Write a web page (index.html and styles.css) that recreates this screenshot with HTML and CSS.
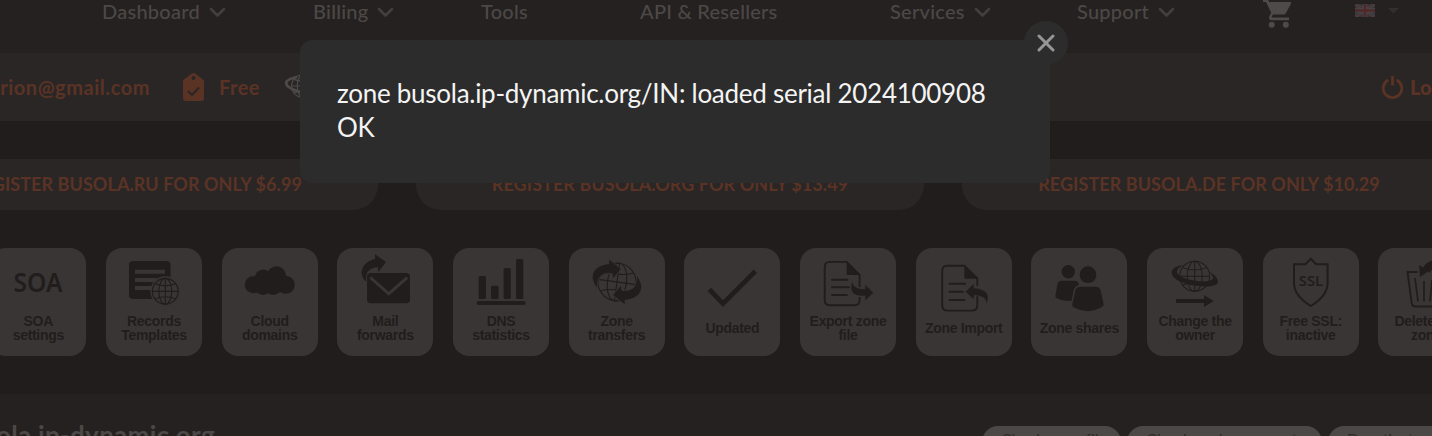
FILE: index.html
```html
<!DOCTYPE html>
<html lang="en">
<head>
<meta charset="utf-8">
<title>Zone management</title>
<link rel="stylesheet" href="styles.css">
</head>
<body>
<svg width="0" height="0" class="defs">
  <defs>
    <g id="globe" fill="none" stroke="currentColor">
      <circle r="19"/><ellipse rx="9.5" ry="19"/>
      <path d="M-19 0H19M0-19V19M-15-11Q0-5 15-11M-15 11Q0 5 15 11"/>
    </g>
    <path id="chev" d="M2 2l6.500 6.500L15 2" fill="none" stroke="#433f3e" stroke-width="2.600" stroke-linecap="round" stroke-linejoin="round"/>
  </defs>
</svg>
<div class="page">
  <nav class="nav">
    <a><span>Dashboard</span><svg width="17" height="11"><use href="#chev"/></svg></a>
    <a><span>Billing</span><svg width="17" height="11"><use href="#chev"/></svg></a>
    <a><span>Tools</span></a>
    <a><span>API &amp; Resellers</span></a>
    <a><span>Services</span><svg width="17" height="11"><use href="#chev"/></svg></a>
    <a><span>Support</span><svg width="17" height="11"><use href="#chev"/></svg></a>
    <a class="cart"><svg width="29" height="29" viewBox="0 0 29 29"><path fill="currentColor" d="M0 0h4.800l1.400 3H27q1.700.2 1 1.700l-5.200 9.500q-.8 1.300-2.300 1.300H9.900l-1.300 2.400q0 .5.500.5H26v2.900H8.600q-3.500-.4-2.300-4l1.900-3.500L3 2.900H0z"/><circle cx="8.700" cy="25.800" r="3" fill="currentColor"/><circle cx="22.800" cy="25.800" r="3" fill="currentColor"/></svg></a>
    <a class="lang"><svg width="20" height="13"><rect width="20" height="13" fill="#33313c"/><path d="M0 0l20 13M20 0L0 13" stroke="#4a4546" stroke-width="3"/><path d="M0 0l20 13M20 0L0 13" stroke="#4a2b2c" stroke-width="1"/><path d="M10 0v13M0 6.500h20" stroke="#4a4546" stroke-width="4.600"/><path d="M10 0v13M0 6.500h20" stroke="#502829" stroke-width="2.600"/></svg><svg width="12" height="6"><path d="M0 0h11L5.500 5.500z" fill="#332f2e"/></svg></a>
  </nav>
  <div class="account">
    <span class="mail">marion@gmail.com</span>
    <svg class="tag" width="21" height="29" viewBox="0 0 21 29"><path fill="currentColor" fill-rule="evenodd" d="M8.500.8Q10.500-.6 12.500.8L20 6.500q1 .8 1 2V25q0 3-3 3H3q-3 0-3-3V8.500q0-1.200 1-2zM10.500 3a2 2 0 100 4 2 2 0 000-4z"/><path d="M5 18l4 4 7-7.500" fill="none" stroke="#2a2625" stroke-width="2"/></svg>
    <span class="plan">Free</span>
    <svg class="planet" width="46" height="30" viewBox="0 0 46 30"><use href="#globe" transform="translate(18 14) scale(.6)" stroke-width="2"/><path fill="none" stroke="currentColor" stroke-width="2.800" d="M12 5C-3 8-2 14 12 19s26 1 22-5"/></svg>
    <span class="logout"><svg width="23" height="25" viewBox="0 0 23 25"><path d="M7.300 5a9.300 9.300 0 108.400 0M11.500 1v9.500" fill="none" stroke="currentColor" stroke-width="2.800"/></svg><b>Logout</b></span>
  </div>
  <div class="offers">
    <a>REGISTER BUSOLA.RU FOR ONLY $6.99</a>
    <a>REGISTER BUSOLA.ORG FOR ONLY $13.49</a>
    <a>REGISTER BUSOLA.DE FOR ONLY $10.29</a>
  </div>
  <div class="tiles">
    <a><svg class="ic" viewBox="0 0 96 66"><text class="soa" x="23.500" y="43.700" textLength="49" lengthAdjust="spacingAndGlyphs">SOA</text></svg><span>SOA<br>settings</span></a>
    <a><svg class="ic" viewBox="0 0 96 66"><rect x="23" y="13" width="41.500" height="38" rx="4"/><path class="cut" d="M31 23.700h26M31 31.900h18M31 40h14" stroke-width="4"/><circle cx="59.300" cy="43.300" r="15" fill="#393534"/><use href="#globe" transform="translate(59.300 43.300) scale(.68)" stroke-width="1.700"/></svg><span>Records<br>Templates</span></a>
    <a><svg class="ic" viewBox="0 0 96 66"><circle cx="31.200" cy="36.800" r="8.500"/><circle cx="41.300" cy="30.300" r="8.700"/><circle cx="54.500" cy="27.700" r="9.500"/><circle cx="63.800" cy="36.800" r="9"/><circle cx="41" cy="38.500" r="8.500"/><circle cx="51.300" cy="38.500" r="8.500"/></svg><span>Cloud<br>domains</span></a>
    <a><svg class="ic" viewBox="0 0 96 66"><rect x="30" y="25" width="43" height="30.300" rx="4"/><path class="cut" d="M34.500 30.500l17.200 15.300L69 30.500" stroke-width="3"/><path d="M29.300 33.700C22 28 22.500 15 38 11V6.300L49 14l-7.700 10-.5-5C33 20 28 23 29.300 33.700z"/></svg><span>Mail<br>forwards</span></a>
    <a><svg class="ic" viewBox="0 0 96 66"><rect x="25.700" y="28" width="7.300" height="23" rx="1.500"/><rect x="38" y="37.700" width="7.600" height="13.300" rx="1.500"/><rect x="50.600" y="20" width="7.200" height="31" rx="1.500"/><rect x="63" y="11" width="7.300" height="40" rx="1.500"/><rect x="23.700" y="53" width="49" height="4" rx="2"/></svg><span>DNS<br>statistics</span></a>
    <a><svg class="ic" viewBox="0 0 96 66"><use href="#globe" transform="translate(48 34) rotate(8)" stroke-width="1.100"/><g class="halo"><path id="sw" d="M28 39.500C20 29 23 18 40.300 16v-4.300L51.700 21l-7.400 9-1-4.700C34 24 27.500 28 28 39.500z"/><use href="#sw" transform="rotate(180 48 34)"/></g></svg><span>Zone<br>transfers</span></a>
    <a><svg class="ic" viewBox="0 0 96 66"><path class="ln" d="M25.300 41.300L39 55.600l32.300-32.300" stroke-width="4.800"/></svg><span>Updated</span></a>
    <a><svg class="ic" viewBox="0 0 96 66"><path class="ln" d="M59.600 39V27L46.700 13.900H30q-5.300 0-5.300 5.300V52q0 5.300 5.300 5.300h24.300q5.300 0 5.300-5.300v-3" stroke-width="1.900"/><path d="M46.700 14v13h13z"/><path class="ln" d="M32 31.700h15.500M32 39.300h17M32 47h15" stroke-width="1.900" stroke-linecap="round"/><path class="halo" d="M52.500 33Q52 41 65.300 41.300V37l8 7.700-8 7.500V47.500Q47 49 52.500 33z"/></svg><span>Export zone<br>file</span></a>
    <a><svg class="ic" viewBox="0 0 96 66"><path class="ln" d="M61.300 38V30.500L48.400 17.700H31.500q-5.300 0-5.300 5.300V57q0 5.600 5.300 5.600h24.500q5.300 0 5.300-5.600v-9" stroke-width="1.900"/><path d="M48.400 17.700v13h13z"/><path class="ln" d="M33.500 35.700h15.500M33.500 43.700h13.500M33.500 52h15" stroke-width="1.900" stroke-linecap="round"/><path class="halo" d="M70 56Q72 48 57.700 47v4.300l-8-7.600 8-7.700v4.300Q77 42 70 56z"/></svg><span>Zone Import</span></a>
    <a><svg class="ic" viewBox="0 0 96 66"><circle cx="37.300" cy="23.700" r="6.700"/><circle cx="57" cy="26.700" r="8.400"/><path d="M31 32.800h13q3 0 4 4-4 1.500-5.500 6L40.500 53Q30 53 25.500 50q-1.500-1-1-3l2-11q1-3.200 4.500-3.200z"/><path d="M49.500 38.700h15q4.300 0 5.200 4l2.800 13q.5 2-1.500 3.300Q57 67 43 59.500q-2.300-1.300-1.700-3.500l3-13.300q1-4 5.200-4z"/></svg><span>Zone shares</span></a>
    <a><svg class="ic" viewBox="0 0 96 66"><use href="#globe" transform="translate(47.700 28.300) scale(.79)" stroke-width="1.300"/><path d="M37 17C22 18 21 28 33 33.500c13 6 38 7 38 .5 0-4-4-8-9.500-10.500 4 3 6 6.500 3 8.500-4 2.500-18 1.500-27.500-2C28 26.500 27 21 37 17z"/><path d="M29 51h28v-4l9.700 6-9.700 6v-4H29z"/></svg><span>Change the<br>owner</span></a>
    <a><svg class="ic" viewBox="0 0 96 66"><path class="ln" d="M31 16.300h11.500l5.300-5.500 5.300 5.500h11.500V35c0 10-7 17-16.800 23C38 52 31 45 31 35z" stroke-width="2"/><text class="ssl" x="35.800" y="38" textLength="24.200" lengthAdjust="spacingAndGlyphs">SSL</text></svg><span>Free SSL:<br>inactive</span></a>
    <a><svg class="ic" viewBox="0 0 96 66"><path class="ln" d="M39.500 24H29.500l4.200 31q.4 3.500 4 3.500h21q3.600 0 4-3.500L67 24h-9" stroke-width="1.900"/><path class="ln" d="M37 30l3 23.500M46 33v20.500M54 32l-2 21.500" stroke-width="1.700"/><path d="M41 17l4 2.500Q50 12 58 12l-6 13-2-1.500L42 29z"/></svg><span>Delete the<br>zone</span></a>
  </div>
  <div class="zone">
    <h1>busola.ip-dynamic.org</h1>
    <div class="btns"><a>Check zone file</a><a>Check and regenerate</a><a>Deactivate</a></div>
  </div>
</div>
<div class="modal">
  <p>zone busola.ip-dynamic.org/IN: loaded serial 2024100908<br>OK</p>
  <div class="close"><svg width="18" height="18"><path d="M2 2l14 14M16 2L2 16" stroke="#969696" stroke-width="3" stroke-linecap="round"/></svg></div>
</div>
</body>
</html>
```
FILE: styles.css
```css
* { box-sizing: border-box; }
body { margin: 0; width: 1432px; height: 436px; overflow: hidden; background: #211d1c; font-family: Lato, "Noto Sans", sans-serif; position: relative; }
.defs { position: absolute; }
.page { height: 436px; overflow: hidden; display: flex; flex-direction: column; }
.nav { height: 53px; flex: none; background: #252120; display: grid; grid-template-columns: 211px 168px 159px 250px 187px 186px 92px 1fr; padding-left: 102px; color: #4c4847; font-size: 20px; font-weight: 500; letter-spacing: .25px; align-items: start; white-space: nowrap; }
.nav a { display: flex; align-items: center; height: 24px; gap: 9px; }
.nav span { padding-bottom: 2px; }
.nav a > svg { flex: none; }
.nav .cart { height: 28px; align-items: flex-end; color: #4e4a49; }
.nav .lang { gap: 13px; padding-bottom: 3px; }
.account { height: 68px; flex: none; background: #2a2625; color: #5a3325; font-size: 20px; font-weight: 700; display: flex; align-items: center; white-space: nowrap; }
.account > * { flex: none; }
.mail { width: 183px; display: flex; justify-content: flex-end; padding-right: 33px; letter-spacing: .55px; }
.plan { margin-left: 15px; width: 66px; letter-spacing: .5px; }
.planet { color: #4e4a49; }
.logout { margin-left: 1050px; display: flex; align-items: center; gap: 6px; }
.offers { flex: none; margin: 38px 0 0 -114px; display: flex; gap: 38px; }
.offers a { flex: none; width: 492px; height: 51px; border-radius: 25px; background: #2a2625; color: #5a3325; font-size: 18px; font-weight: 700; letter-spacing: .06px; text-align: center; line-height: 50px; white-space: nowrap; }
.offers a:first-child { padding-left: 8px; }
.offers a:nth-child(2) { width: 508px; }
.offers a:last-child { padding-left: 2px; }
.tiles { flex: none; margin: 38px 0 0 -9.7px; display: flex; gap: 19.68px; }
.tiles a { flex: none; width: 96px; height: 108px; border-radius: 16px; background: #393534; color: #211d1c; display: grid; grid-template-rows: 66px 27px; align-items: center; }
.tiles span { text-align: center; font: 700 14px/14px "Liberation Sans", Arial, sans-serif; letter-spacing: -.3px; white-space: nowrap; }
.ic { display: block; width: 96px; height: 66px; fill: currentColor; }
.ln { fill: none; stroke: #211d1c; }
.cut { fill: none; stroke: #393534; stroke-linecap: square; }
.halo { stroke: #393534; stroke-width: 1.6; paint-order: stroke; }
.soa { font: 600 27px "Noto Sans", sans-serif; }
.ssl { font: 600 14px "Noto Sans", sans-serif; }
.zone { flex: none; margin-top: 38px; height: 80px; background: #252120; display: flex; padding-top: 26px; }
.zone h1 { margin: 0; width: 215px; display: flex; justify-content: flex-end; font-size: 26px; font-weight: 700; letter-spacing: .3px; line-height: 31px; color: #4c4847; white-space: nowrap; }
.btns { display: flex; gap: 6px; margin: 6px 0 0 767px; }
.btns a { flex: none; height: 32px; width: 139px; border-radius: 16px; background: #4c4847; color: #2f2b2a; padding-left: 19px; font-size: 16px; line-height: 25px; letter-spacing: -.1px; white-space: nowrap; }
.btns a:nth-child(2) { width: 195px; letter-spacing: .35px; }
.modal { position: absolute; left: 300px; top: 40px; width: 750px; height: 143px; border-radius: 12px; background: #2c2c2c; padding: 36px 37px; color: #f4f4f4; }
.modal p { margin: 0; font-size: 26px; line-height: 34px; letter-spacing: -.27px; white-space: nowrap; }
.close { position: absolute; left: 724px; top: -19px; width: 44px; height: 44px; border-radius: 50%; background: #2c2c2c; display: flex; align-items: center; justify-content: center; }
```
